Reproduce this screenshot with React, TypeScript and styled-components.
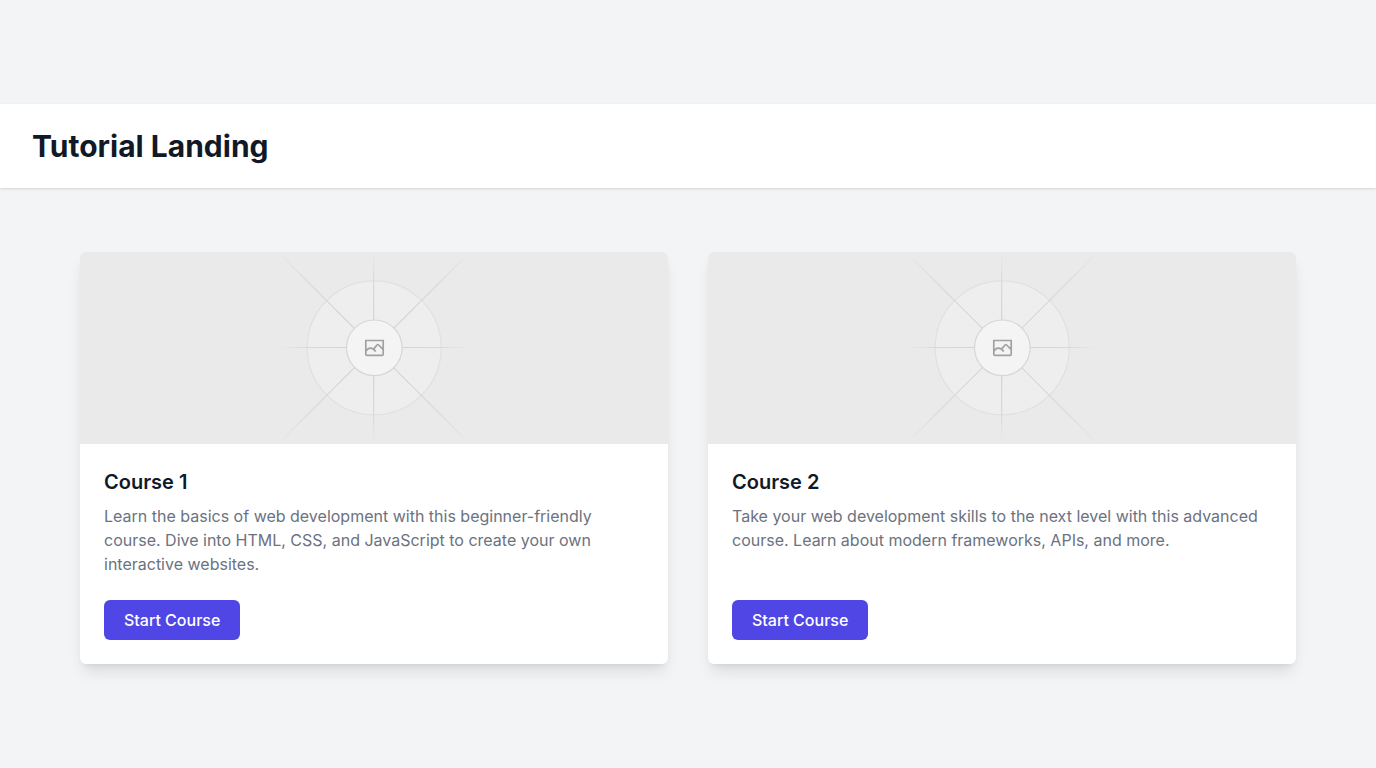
import React from "react";
import styled, { createGlobalStyle } from "styled-components";

const GlobalStyle = createGlobalStyle`
  *, *::before, *::after { box-sizing: border-box; }
  body {
    margin: 0;
    background: #f3f4f6;
    color: #111827;
    font-family: Inter, "Liberation Sans", sans-serif;
    font-size: 16px;
    line-height: 24px;
  }
`;

const Page = styled.div`
  min-height: 100vh;
  padding-top: 104px;
`;

const Header = styled.header`
  padding: 24px 32px;
  background: #ffffff;
  box-shadow: 0 1px 3px rgba(0, 0, 0, 0.1), 0 1px 2px -1px rgba(0, 0, 0, 0.1);
`;

const Title = styled.h1`
  margin: 0;
  font-size: 30px;
  line-height: 36px;
  font-weight: 700;
`;

const Main = styled.main`
  max-width: 1280px;
  margin: 0 auto;
  padding: 64px 32px;
`;

const CourseGrid = styled.div`
  display: grid;
  grid-template-columns: repeat(2, minmax(0, 1fr));
  gap: 40px;

  @media (max-width: 767px) {
    grid-template-columns: minmax(0, 1fr);
  }
`;

const Card = styled.article`
  display: flex;
  flex-direction: column;
  overflow: hidden;
  border-radius: 6px;
  background: #ffffff;
  box-shadow: 0 10px 15px -3px rgba(0, 0, 0, 0.1), 0 4px 6px -4px rgba(0, 0, 0, 0.1);
`;

const Cover = styled.div`
  display: flex;
  justify-content: center;
  background: #eaeaea;
`;

const CoverArt = styled.svg`
  display: block;
  width: 192px;
  height: 192px;
`;

const CardBody = styled.div`
  display: flex;
  flex: 1;
  flex-direction: column;
  align-items: flex-start;
  padding: 24px;
`;

const CourseTitle = styled.h2`
  margin: 0 0 8px;
  font-size: 20px;
  line-height: 28px;
  font-weight: 600;
`;

const Description = styled.p`
  flex: 1;
  margin: 0 0 24px;
  color: #6b7280;
`;

const StartButton = styled.button`
  padding: 8px 20px;
  border: 0;
  border-radius: 6px;
  background: #4f46e5;
  color: #ffffff;
  font: inherit;
  font-weight: 500;
  cursor: pointer;

  &:hover { background: #4338ca; }
`;

function Placeholder({ id }: { id: string }) {
  const axis = `${id}-axis`;
  const diagonal = `${id}-diagonal`;
  return (
    <CoverArt viewBox="0 0 192 192" fill="none" aria-hidden="true">
      <defs>
        <radialGradient id={axis} gradientUnits="userSpaceOnUse" cx="96" cy="96" r="95">
          <stop offset="0.3" stopColor="#d4d4d4" />
          <stop offset="0.7" stopColor="#d8d8d8" />
          <stop offset="1" stopColor="#d8d8d8" stopOpacity="0" />
        </radialGradient>
        <radialGradient id={diagonal} gradientUnits="userSpaceOnUse" cx="96" cy="96" r="136">
          <stop offset="0.2" stopColor="#d4d4d4" />
          <stop offset="0.68" stopColor="#d9d9d9" />
          <stop offset="1" stopColor="#d9d9d9" stopOpacity="0" />
        </radialGradient>
      </defs>
      <circle cx="96.2" cy="95.8" r="67" fill="#eeeeee" stroke="#e0e0e0" strokeWidth="1.2" />
      <path d="M95.7 1V191M1 95.5H191" stroke={`url(#${axis})`} strokeWidth="1.2" />
      <path d="M0 0L192 192M192 0L0 192" stroke={`url(#${diagonal})`} strokeWidth="1.2" />
      <circle cx="96.3" cy="95.8" r="27.8" fill="#f4f4f4" stroke="#d6d6d6" strokeWidth="1.2" />
      <path
        d="M87.8 88.5H105.2V102.2Q105.2 103.4 104 103.4H89Q87.8 103.4 87.8 102.2ZM87.8 99.2C90 95.4 94.2 94.6 97.7 99.4M95.3 97.4L99 93Q99.8 92 100.7 93L105.2 97.6"
        stroke="#a1a1a1"
        strokeWidth="1.7"
      />
    </CoverArt>
  );
}

const courses = [
  {
    id: "course-1",
    title: "Course 1",
    description:
      "Learn the basics of web development with this beginner-friendly course. Dive into HTML, CSS, and JavaScript to create your own interactive websites.",
  },
  {
    id: "course-2",
    title: "Course 2",
    description:
      "Take your web development skills to the next level with this advanced course. Learn about modern frameworks, APIs, and more.",
  },
];

export default function App() {
  return (
    <>
      <GlobalStyle />
      <Page>
        <Header>
          <Title>Tutorial Landing</Title>
        </Header>
        <Main>
          <CourseGrid>
            {courses.map((course) => (
              <Card key={course.id}>
                <Cover>
                  <Placeholder id={course.id} />
                </Cover>
                <CardBody>
                  <CourseTitle>{course.title}</CourseTitle>
                  <Description>{course.description}</Description>
                  <StartButton type="button">Start Course</StartButton>
                </CardBody>
              </Card>
            ))}
          </CourseGrid>
        </Main>
      </Page>
    </>
  );
}
